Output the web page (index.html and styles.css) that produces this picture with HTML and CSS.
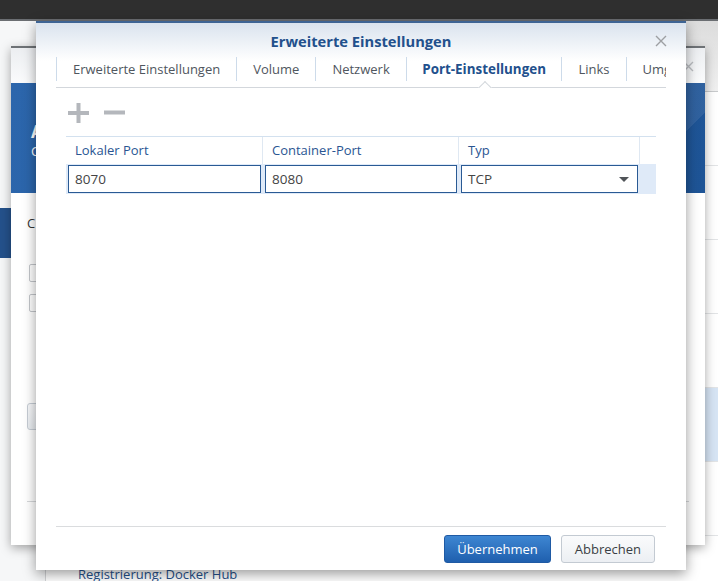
FILE: index.html
```html
<!DOCTYPE html>
<html lang="de">
<head>
<meta charset="utf-8">
<title>Erweiterte Einstellungen</title>
<link rel="stylesheet" href="styles.css">
</head>
<body>
<div class="app">
  <div class="app-topbar"></div>
  <div class="app-main">
    <div class="app-side"><div class="side-item"></div></div>
    <div class="app-content">
      <div class="app-head"></div>
      <div class="list-row"></div>
      <div class="list-row"></div>
      <div class="list-row"></div>
      <div class="list-row"></div>
      <div class="list-row sel"></div>
      <div class="list-row"></div>
      <div class="app-detail">Registrierung: Docker Hub</div>
    </div>
  </div>
</div>

<div class="win2">
  <div class="win2-head">
    <svg class="win2-close" viewBox="0 0 11 11"><path d="M1 1L10 10M10 1L1 10" stroke="#b9bcc0" stroke-width="1.4" fill="none"/></svg>
  </div>
  <div class="win2-banner">
    <div class="banner-title">A</div>
    <div class="banner-sub">C</div>
  </div>
  <div class="win2-body">
    <div class="w2-label">C</div>
    <div class="w2-check"></div>
    <div class="w2-check second"></div>
    <div class="w2-btn"></div>
    <div class="w2-line"></div>
  </div>
</div>

<div class="dialog">
  <div class="dlg-head">
    <h1 class="dlg-title">Erweiterte Einstellungen</h1>
    <svg class="dlg-close" viewBox="0 0 12 12"><path d="M1 1L11 11M11 1L1 11" stroke="#9d9fa2" stroke-width="1.4" fill="none"/></svg>
  </div>
  <div class="tabs">
    <div class="tab">Erweiterte Einstellungen</div>
    <div class="tab">Volume</div>
    <div class="tab">Netzwerk</div>
    <div class="tab active">Port-Einstellungen</div>
    <div class="tab">Links</div>
    <div class="tab">Umgebung</div>
  </div>
  <div class="dlg-body">
    <div class="toolbar">
      <svg class="tool" viewBox="0 0 21 20"><rect x="0" y="8" width="21" height="4" fill="#b4b7bc"/><rect x="8.5" y="0" width="4" height="20" fill="#b4b7bc"/></svg>
      <svg class="tool" viewBox="0 0 21 20"><rect x="0" y="7.5" width="21" height="4" fill="#b4b7bc"/></svg>
    </div>
    <div class="grid">
      <div class="grid-head">
        <div class="gh-cell">Lokaler Port</div>
        <div class="gh-cell">Container-Port</div>
        <div class="gh-cell">Typ</div>
        <div class="gh-cell gh-end"></div>
      </div>
      <div class="grid-row">
        <div class="cell"><div class="field">8070</div></div>
        <div class="cell"><div class="field">8080</div></div>
        <div class="cell"><div class="field select"><span>TCP</span><svg class="arrow" viewBox="0 0 10 5"><path d="M0 0H10L5 5Z" fill="#505458"/></svg></div></div>
        <div class="cell"></div>
      </div>
    </div>
  </div>
  <div class="dlg-foot">
    <button class="btn btn-primary">Übernehmen</button>
    <button class="btn">Abbrechen</button>
  </div>
</div>
</body>
</html>
```

FILE: styles.css
```css
* { box-sizing: border-box; }
html, body { margin: 0; padding: 0; }
body {
  width: 718px;
  height: 581px;
  overflow: hidden;
  position: relative;
  background: #fff;
  font-family: "Open Sans", "Liberation Sans", sans-serif;
}

/* far background application */
.app { display: flex; flex-direction: column; height: 581px; }
.app-topbar { flex: none; height: 21px; background: #2f2f2f; border-bottom: 2px solid #6b6e72; }
.app-main { flex: 1; display: flex; }
.app-side { width: 46px; flex: none; background: #f6f7f8; border-right: 1px solid #d2d4d6; padding-top: 187px; }
.side-item { height: 50px; background: #24518b; }
.app-content { flex: 1; display: flex; flex-direction: column; }
.app-head { height: 71px; flex: none; background: linear-gradient(#dcdcdc, #f0f0f0); border-bottom: 1px solid #c8cacc; }
.list-row { height: 74px; flex: none; border-bottom: 1px solid #e2e4e6; }
.list-row.sel { background: #d6e4f4; }
.app-detail { padding: 29px 0 0 32px; font-size: 13px; line-height: 18px; color: #25508a; }

/* middle window */
.win2 {
  position: absolute;
  left: 11px;
  top: 46px;
  width: 694px;
  height: 499px;
  background: #fff;
  border-top: 2px solid #6e7276;
  box-shadow: 0 3px 10px rgba(0, 0, 0, 0.35);
}
.win2-head { height: 35px; background: linear-gradient(#eceef1, #fafbfc); display: flex; justify-content: flex-end; align-items: flex-start; padding: 13px 11px 0 0; }
.win2-close { width: 11px; height: 11px; display: block; }
.win2-banner {
  height: 110px;
  padding: 39px 0 0 20px;
  color: #fff;
  background:
    linear-gradient(135deg, rgba(255,255,255,0) 80%, rgba(255,255,255,0.08) 80%, rgba(255,255,255,0.08) 90%, rgba(255,255,255,0) 90%),
    linear-gradient(100deg, #2c66ac, #1e5496);
}
.banner-title { font-size: 17px; font-weight: 700; line-height: 20px; }
.banner-sub { font-size: 13px; line-height: 18px; }
.win2-body { padding: 21px 16px 0 16px; }
.w2-label { font-size: 13px; line-height: 18px; color: #333; }
.w2-check { width: 18px; height: 18px; margin: 32px 0 0 2px; border: 1px solid #c3c6ca; border-radius: 2px; background: #fff; }
.w2-check.second { margin-top: 12px; }
.w2-btn { width: 90px; height: 27px; margin-top: 91px; border: 1px solid #c6cdd5; border-radius: 3px; background: linear-gradient(#f7f8fa, #e9edf1); }
.w2-line { height: 1px; margin-top: 71px; background: #d6d8da; }

/* front dialog */
.dialog {
  position: absolute;
  left: 36px;
  top: 21px;
  width: 650px;
  height: 549px;
  display: flex;
  flex-direction: column;
  border-top: 2px solid #3e6494;
  background: linear-gradient(#dae3ee 0, #ffffff 38px) no-repeat, #fff;
  box-shadow: 0 4px 12px rgba(0, 0, 0, 0.4);
}
.dlg-head { flex: none; height: 34px; padding-top: 2px; display: flex; align-items: center; justify-content: center; position: relative; }
.dlg-title { margin: 0; font-size: 14.7px; font-weight: 700; color: #22508c; line-height: 20px; }
.dlg-close { position: absolute; right: 19px; top: 12px; width: 12px; height: 12px; }

.tabs {
  flex: none;
  margin: 0 20px;
  height: 31px;
  display: flex;
  overflow: hidden;
  background: linear-gradient(#d3d7dc, #d3d7dc) left bottom / 100% 1px no-repeat;
}
.tab {
  flex: none;
  position: relative;
  height: 24px;
  line-height: 24px;
  padding: 0 16px;
  border-left: 1px solid #cddbea;
  font-size: 13px;
  color: #4f565e;
  white-space: nowrap;
}
.tab.active { font-weight: 700; color: #22508c; font-size: 13.4px; padding: 0 15.5px; }
.tab.active::after {
  content: "";
  position: absolute;
  left: 50%;
  top: 26px;
  width: 9px;
  height: 9px;
  margin-left: -4.5px;
  background: #fff;
  border-left: 1px solid #d3d7dc;
  border-top: 1px solid #d3d7dc;
  transform: rotate(45deg);
}

.dlg-body { flex: 1; padding: 0 20px; }
.toolbar { display: flex; gap: 15px; padding: 15px 0 13px 12px; }
.tool { width: 21px; height: 20px; display: block; }

.grid { margin: 0 10px; border-top: 1px solid #d3e1ef; }
.grid-head, .grid-row { display: grid; grid-template-columns: 197px 196px 181px 16px; }
.grid-head { height: 27px; }
.gh-cell { border-right: 1px solid #dfe8f2; padding-left: 9px; line-height: 26px; font-size: 13px; color: #2a5592; }
.gh-end { border-right: none; }
.grid-row { height: 30px; background: #dfeaf8; }
.cell { padding: 1px 2px; }
.field {
  height: 28px;
  border: 1px solid #2a5a94;
  background: #fff;
  padding-left: 6px;
  line-height: 26px;
  font-size: 13.5px;
  color: #444;
}
.field.select { display: flex; align-items: center; justify-content: space-between; padding-right: 8px; }
.arrow { width: 10px; height: 5px; display: block; }

.dlg-foot {
  flex: none;
  margin: 0 20px;
  border-top: 1px solid #dadcde;
  display: flex;
  justify-content: flex-end;
  gap: 10px;
  padding: 8px 11px 7px 0;
}
.btn {
  height: 28px;
  padding: 0 13px;
  border: 1px solid #c3cad2;
  border-radius: 3px;
  background: linear-gradient(#fafbfc, #eceff3);
  font-family: "Open Sans", "Liberation Sans", sans-serif;
  font-size: 13px;
  color: #3a3f45;
}
.btn-primary {
  padding: 0 12px;
  border-color: #1f5aa4;
  background: linear-gradient(#3e86d2, #1f5fae);
  color: #fff;
}
```
